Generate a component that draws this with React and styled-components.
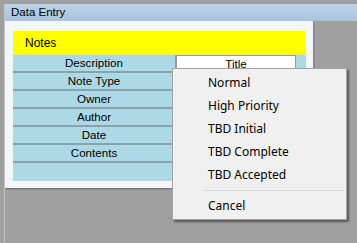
import React from "react";
import styled, { createGlobalStyle } from "styled-components";

const GlobalStyle = createGlobalStyle`
  html, body {
    margin: 0;
    padding: 0;
    background: #a0a0a0;
    overflow: hidden;
  }
`;

const Desktop = styled.div`
  position: relative;
  width: 357px;
  height: 243px;
  padding-top: 4px;
  box-sizing: border-box;
  background: #a0a0a0;
`;

const Frame = styled.div`
  margin-left: 4px;
  height: 239px;
  border-left: 1px solid #c4c4c4;
  display: flex;
  flex-direction: column;
`;

const TitleBar = styled.div`
  height: 17px;
  background: linear-gradient(#bed3e9, #a9c3df);
  font-family: "Liberation Sans", Arial, sans-serif;
  font-size: 11.5px;
  line-height: 17px;
  color: #000;
  padding-left: 6px;
`;

const Window = styled.div`
  width: 309px;
  height: 168px;
  background: #f3f6fa;
  border-right: 1px solid #8c8c8c;
  border-bottom: 1px solid #7a7a7a;
  box-shadow: 1px 1px 0 #8e8e8e;
  padding: 10px 7px 7px 8px;
  box-sizing: border-box;
  display: flex;
  flex-direction: column;
`;

const Grid = styled.div`
  flex: 1;
  display: flex;
  flex-direction: column;
  background: #add8e6;
  font-family: "Liberation Sans", Arial, sans-serif;
  color: #000;
`;

const Header = styled.div`
  height: 24px;
  background: #ffff00;
  font-size: 12px;
  line-height: 24px;
  padding-left: 12px;
`;

const Row = styled.div`
  display: grid;
  grid-template-columns: 163px 120px 1fr;
  height: 18px;
  box-sizing: border-box;
  border-bottom: 2px solid #8aa2ac;
`;

const Label = styled.div`
  border-right: 1px solid #8aa0aa;
  text-align: center;
  font-size: 11.6px;
  line-height: 16px;
`;

const Cell = styled.div`
  background: ${(p) => (p.$filled ? "#ffffff" : "transparent")};
  border: ${(p) => (p.$filled ? "1px solid #9a9a9a" : "none")};
  border-bottom: none;
  text-align: center;
  font-size: 11.6px;
  line-height: 16px;
`;

const Menu = styled.div`
  position: absolute;
  left: 172px;
  top: 68px;
  width: 175px;
  height: 152px;
  box-sizing: border-box;
  padding: 2px 0;
  background: #f0f0f0;
  border: 1px solid #a3a3a3;
  box-shadow: 2px 2px 2px rgba(0, 0, 0, 0.45);
  font-family: "Noto Sans", "Open Sans", sans-serif;
  font-size: 12px;
  color: #000;
`;

const Item = styled.div`
  height: 23px;
  line-height: 23px;
  padding-left: 35px;
`;

const Separator = styled.div`
  height: 1px;
  margin: 4px 2px 3px 31px;
  background: #d7d7d7;
`;

const labels = ["Description", "Note Type", "Owner", "Author", "Date", "Contents"];
const choices = ["Normal", "High Priority", "TBD Initial", "TBD Complete", "TBD Accepted"];

export default function App() {
  return (
    <>
      <GlobalStyle />
      <Desktop>
        <Frame>
          <TitleBar>Data Entry</TitleBar>
          <Window>
            <Grid>
              <Header>Notes</Header>
              {labels.map((l, i) => (
                <Row key={l}>
                  <Label>{l}</Label>
                  <Cell $filled={i === 0}>{i === 0 ? "Title" : ""}</Cell>
                  <Cell />
                </Row>
              ))}
            </Grid>
          </Window>
        </Frame>
        <Menu>
          {choices.map((c) => (
            <Item key={c}>{c}</Item>
          ))}
          <Separator />
          <Item>Cancel</Item>
        </Menu>
      </Desktop>
    </>
  );
}
